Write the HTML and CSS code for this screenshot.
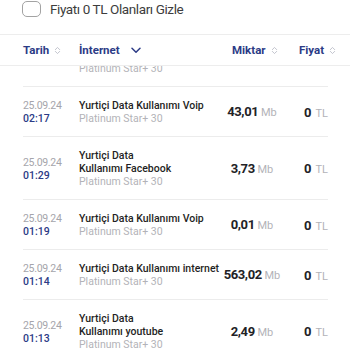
FILE: index.html
```html
<!DOCTYPE html>
<html lang="tr">
<head>
<meta charset="utf-8">
<link rel="stylesheet" href="styles.css">
</head>
<body>
<div class="page">
  <label class="filter">
    <span class="checkbox"></span>
    <span class="filter-label">Fiyatı 0 TL Olanları Gizle</span>
  </label>

  <div class="table-head">
    <div class="th th-date">Tarih <svg class="sort" viewBox="0 0 8 10" width="7" height="9"><path d="M1.5 4 L4 1.5 L6.5 4 M1.5 6 L4 8.5 L6.5 6" fill="none" stroke="#b9bcc6" stroke-width="1" stroke-linecap="round" stroke-linejoin="round"/></svg></div>
    <div class="th th-type">İnternet <svg class="chev" viewBox="0 0 10 7" width="10" height="7"><path d="M1 1.2 L5 5.2 L9 1.2" fill="none" stroke="#2c3b86" stroke-width="1.5" stroke-linecap="round" stroke-linejoin="round"/></svg></div>
    <div class="th th-amount">Miktar <svg class="sort" viewBox="0 0 8 10" width="7" height="9"><path d="M1.5 4 L4 1.5 L6.5 4 M1.5 6 L4 8.5 L6.5 6" fill="none" stroke="#b9bcc6" stroke-width="1" stroke-linecap="round" stroke-linejoin="round"/></svg></div>
    <div class="th th-price">Fiyat <svg class="sort" viewBox="0 0 8 10" width="7" height="9"><path d="M1.5 4 L4 1.5 L6.5 4 M1.5 6 L4 8.5 L6.5 6" fill="none" stroke="#b9bcc6" stroke-width="1" stroke-linecap="round" stroke-linejoin="round"/></svg></div>
  </div>

  <div class="table-body">
    <div class="rows">
      <div class="row">
        <div class="date"></div>
        <div class="desc"><div class="sub">Platinum Star+ 30</div></div>
        <div class="amount"></div>
        <div class="price"></div>
      </div>

      <div class="row">
        <div class="date"><div class="day">25.09.24</div><div class="time">02:17</div></div>
        <div class="desc"><div class="title">Yurtiçi Data Kullanımı Voip</div><div class="sub">Platinum Star+ 30</div></div>
        <div class="amount"><b>43,01</b> <span>Mb</span></div>
        <div class="price"><b>0</b> <span>TL</span></div>
      </div>

      <div class="row">
        <div class="date"><div class="day">25.09.24</div><div class="time">01:29</div></div>
        <div class="desc"><div class="title">Yurtiçi Data<br>Kullanımı Facebook</div><div class="sub">Platinum Star+ 30</div></div>
        <div class="amount"><b>3,73</b> <span>Mb</span></div>
        <div class="price"><b>0</b> <span>TL</span></div>
      </div>

      <div class="row">
        <div class="date"><div class="day">25.09.24</div><div class="time">01:19</div></div>
        <div class="desc"><div class="title">Yurtiçi Data Kullanımı Voip</div><div class="sub">Platinum Star+ 30</div></div>
        <div class="amount"><b>0,01</b> <span>Mb</span></div>
        <div class="price"><b>0</b> <span>TL</span></div>
      </div>

      <div class="row">
        <div class="date"><div class="day">25.09.24</div><div class="time">01:14</div></div>
        <div class="desc"><div class="title nowrap">Yurtiçi Data Kullanımı internet</div><div class="sub">Platinum Star+ 30</div></div>
        <div class="amount"><b>563,02</b> <span>Mb</span></div>
        <div class="price"><b>0</b> <span>TL</span></div>
      </div>

      <div class="row">
        <div class="date"><div class="day">25.09.24</div><div class="time">01:13</div></div>
        <div class="desc"><div class="title">Yurtiçi Data<br>Kullanımı youtube</div><div class="sub">Platinum Star+ 30</div></div>
        <div class="amount"><b>2,49</b> <span>Mb</span></div>
        <div class="price"><b>0</b> <span>TL</span></div>
      </div>
    </div>
  </div>
</div>
</body>
</html>
```

FILE: styles.css
```css
* { box-sizing: border-box; }

html, body {
  margin: 0;
  padding: 0;
  background: #ffffff;
}

body {
  font-family: "Roboto", "Liberation Sans", sans-serif;
  width: 350px;
  height: 350px;
  overflow: hidden;
}

.page {
  display: flex;
  flex-direction: column;
  height: 350px;
}

.filter {
  display: flex;
  align-items: flex-start;
  gap: 9px;
  padding: 1px 0 0 22px;
  height: 35px;
  border-bottom: 1px solid #ededed;
}

.checkbox {
  width: 19px;
  height: 16px;
  border: 1.5px solid #a3a3a3;
  border-radius: 5px;
  flex: none;
}

.filter-label {
  font-size: 13.5px;
  letter-spacing: -0.4px;
  line-height: 16px;
  color: #3d3d3d;
}

.table-head {
  display: grid;
  grid-template-columns: 56px 142px 62px 1fr;
  align-items: center;
  height: 31px;
  padding-left: 23px;
  border-bottom: 1px solid #ededed;
}

.th {
  font-size: 11.5px;
  font-weight: 700;
  color: #2c3b86;
  display: flex;
  align-items: center;
  gap: 5px;
  white-space: nowrap;
  line-height: 16px;
}

.th-type .chev { margin-left: 6px; }
.th-amount { padding-left: 11px; }
.th-price { padding-left: 16px; }

.table-body {
  flex: 1;
  overflow: hidden;
}

.rows {
  margin-top: -16px;
}

.row {
  display: grid;
  grid-template-columns: 56px 142px 62px 1fr;
  align-items: center;
  margin: 0 22px 0 23px;
  padding: 12px 0 11px;
  border-bottom: 1px solid #ececec;
  line-height: 13px;
}

.day {
  font-size: 10.5px;
  letter-spacing: -0.3px;
  color: #a5a5ab;
}

.time {
  font-size: 10.5px;
  font-weight: 500;
  color: #2c3b86;
}

.title {
  font-size: 10.5px;
  font-weight: 500;
  color: #1f1f24;
}

.nowrap { white-space: nowrap; }

.sub {
  font-size: 10.5px;
  color: #b3b3b8;
}

.amount {
  text-align: center;
  white-space: nowrap;
  font-size: 11px;
}

.amount b {
  font-size: 13px;
  font-weight: 700;
  letter-spacing: -0.4px;
  color: #222226;
}

.amount span,
.price span {
  color: #b3b3b8;
  font-size: 11px;
}

.price {
  padding-left: 21px;
  white-space: nowrap;
}

.price b {
  font-size: 13px;
  font-weight: 700;
  color: #222226;
}
```
